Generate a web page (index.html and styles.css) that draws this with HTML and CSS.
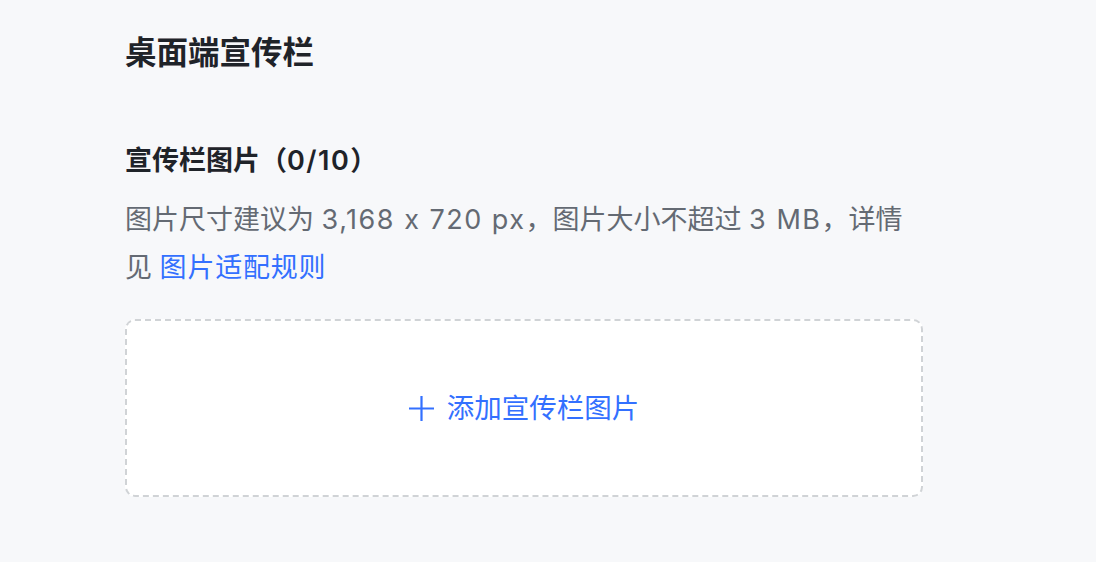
FILE: index.html
```html
<!DOCTYPE html>
<html lang="zh-CN">
<head>
<meta charset="utf-8">
<link rel="stylesheet" href="styles.css">
</head>
<body>
<main class="page">
  <h1 class="title">桌面端宣传栏</h1>
  <section class="field">
    <h2 class="label">宣传栏图片（<span class="en">0/10</span>）</h2>
    <p class="hint">图片尺寸建议为 <span class="en">3,168 x 720 px</span>，图片大小不超过 <span class="en">3 MB</span>，详情见 <a class="link" href="#">图片适配规则</a></p>
    <div class="upload">
      <svg class="plus" viewBox="0 0 25 25" width="25" height="25"><path d="M12.5 0v25M0 12.5h25" stroke="#3370ff" stroke-width="2.2" fill="none"/></svg>
      <span class="upload-text">添加宣传栏图片</span>
    </div>
  </section>
</main>
</body>
</html>
```
FILE: styles.css
```css
html, body {
  margin: 0;
  padding: 0;
  background: #f7f8fa;
}
body {
  font-family: Inter, "Noto Sans CJK SC", sans-serif;
  color: #1f2329;
}
.page {
  padding: 31px 0 0 125px;
  width: 798px;
}
.title {
  margin: 0;
  font-size: 31.5px;
  line-height: 44px;
  font-weight: 700;
}
.field {
  margin-top: 66px;
}
.label {
  margin: 0;
  font-size: 27px;
  line-height: 40px;
  font-weight: 600;
}
.label .en {
  letter-spacing: 1.5px;
}
.hint {
  margin: 15px 0 0;
  font-size: 27px;
  line-height: 48px;
  color: #646a73;
}
.hint .en {
  letter-spacing: 1.5px;
}
.link {
  color: #3370ff;
  text-decoration: none;
  letter-spacing: 0.8px;
}
.upload {
  margin-top: 27px;
  height: 174px;
  border: 2px dashed #d0d3d6;
  border-radius: 10px;
  background: #fff;
  display: flex;
  align-items: center;
  justify-content: center;
  gap: 13px;
  color: #3370ff;
}
.upload-text {
  font-size: 27.5px;
  line-height: 40px;
}
```
